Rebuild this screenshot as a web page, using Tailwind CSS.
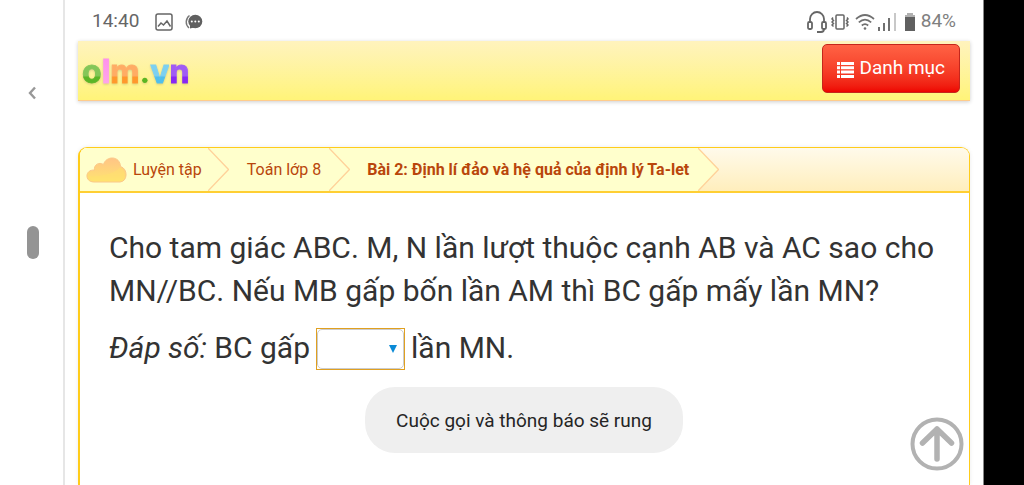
<!DOCTYPE html>
<html lang="vi">
<head>
  <meta charset="UTF-8" />
  <meta name="viewport" content="width=device-width, initial-scale=1.0" />
  <title>Toán lớp 8 - olm.vn</title>
  <script src="https://cdn.jsdelivr.net/npm/@tailwindcss/browser@4"></script>
</head>
<body class="bg-white font-['Roboto',sans-serif] text-[#333] h-screen flex overflow-hidden">
  <!-- Edge panel -->
  <aside class="w-[65px] shrink-0 border-r-2 border-[#e6e6e6] flex flex-col items-center pt-[85px]">
    <button type="button" aria-label="Quay lại" class="h-4">
      <svg class="w-3 h-4" viewBox="0 0 12 16" fill="none" stroke="#989898" stroke-width="2.400"><path d="M9 2.500 4 8l5 5.500" /></svg>
    </button>
    <div class="mt-[125px] ml-0.5 w-3 h-[33px] rounded-full bg-[#949494]"></div>
  </aside>

  <div class="flex-1 min-w-0 flex flex-col px-[13px]">
    <!-- Status bar -->
    <div class="h-[41px] shrink-0 flex items-center justify-between pt-0.5 pl-3.5 pr-3.5 text-[19px] text-[#666]">
      <div class="flex items-center">
        <span>14:40</span>
        <svg class="ml-4 w-[18px] h-[18px]" viewBox="0 0 18 18" fill="none" stroke="#666" stroke-width="1.500"><rect x="1" y="1" width="16" height="16" rx="2" /><path d="M3 13.500 6 10l2.500 2L12 8l3.500 5.500" /></svg>
        <svg class="ml-3 w-[18px] h-4" viewBox="0 0 18 16"><path d="M4.500 1.500a8 8 0 0 0-.5 12.500" fill="none" stroke="#777" stroke-width="1.400" /><ellipse cx="10.300" cy="7.500" rx="7" ry="6.700" fill="#606060" /><path d="M5 9v5.500l4-1z" fill="#606060" /><g fill="#fff"><circle cx="6.800" cy="7.500" r="1" /><circle cx="10.300" cy="7.500" r="1" /><circle cx="13.800" cy="7.500" r="1" /></g></svg>
      </div>
      <div class="flex items-center">
        <svg class="w-5 h-[22px]" viewBox="0 0 20 22" fill="none" stroke="#666" stroke-width="1.800"><path d="M3 12V8a7 7 0 0 1 14 0V18q0 3-3 3h-4" /><rect x="1" y="11" width="4" height="7" rx="1.200" fill="#fff" /><rect x="15" y="11" width="4" height="7" rx="1.200" fill="#fff" /></svg>
        <svg class="ml-1 w-[18px] h-4" viewBox="0 0 18 16" fill="none" stroke="#666" stroke-width="1.500"><rect x="5" y="1" width="8" height="14" rx="1" /><path d="M2 3.500 1 5l1.500 1.500L1 8l1.500 1.500L1 11l1.500 1.500M16 3.500 17 5l-1.500 1.500L17 8l-1.500 1.500L17 11l-1.500 1.500" /></svg>
        <svg class="ml-1.5 w-5 h-4" viewBox="0 0 20 16" fill="none" stroke="#707070" stroke-width="1.700"><path d="M1 5q9-8 18 0M3.800 8.300q6.200-5.500 12.400 0M6.800 11.500q3.200-2.800 6.400 0" /><circle cx="10" cy="14.500" r="1.300" fill="#707070" stroke="none" /></svg>
        <svg class="ml-[3px] w-[18px] h-[18px]" viewBox="0 0 18 18"><path d="M0 14h2v4H0zM5 10h2v8H5zM10 5h2v13h-2z" fill="#707070" /><path d="M16 0h2v18h-2z" fill="#c8c8c8" /></svg>
        <svg class="ml-2 w-3 h-[18px]" viewBox="0 0 12 18"><path d="M3 0h6v2h2v2H1V2h2z" fill="#b0b0b0" /><path d="M1 4h10v14H1z" fill="#606060" /></svg>
        <span class="ml-[5px] text-[#808080]">84%</span>
      </div>
    </div>

    <header class="h-[60px] shrink-0 flex items-start justify-between pt-[3px] pl-1 pr-2.5 bg-linear-to-b from-[#fff3bd] to-[#fff478] border-b border-[#ffcc8c] shadow-[0_1px_4px_rgba(0,0,0,0.2)]">
      <a href="#" class="mt-2 font-['Inter',sans-serif] font-bold text-[32px] leading-[40px] drop-shadow-[0_1px_1px_rgba(0,0,0,0.15)] [-webkit-text-stroke:1px_transparent]"><span class="bg-linear-to-b from-60% from-[#84c658] to-65% to-[#5cb526] bg-clip-text text-transparent">o</span><span class="bg-linear-to-b from-[#ff8cec] to-[#ffaae8] bg-clip-text text-transparent">l</span><span class="bg-linear-to-b from-60% from-[#ffac64] to-65% to-[#ff982c] bg-clip-text text-transparent">m</span><span class="text-[#5bb522]">.</span><span class="bg-linear-to-b from-60% from-[#7cd0f0] to-65% to-[#50beec] bg-clip-text text-transparent">v</span><span class="bg-linear-to-b from-60% from-[#a05cf4] to-65% to-[#8828f4] bg-clip-text text-transparent">n</span></a>
      <button type="button" class="h-[49px] px-3.5 flex items-center gap-[5px] rounded-[5px] border border-[#c4261c] bg-linear-to-b from-[#ff6244] to-[#ee0000] text-white text-[19px]">
        <svg class="mt-0.5 w-[17px] h-4" viewBox="0 0 17 16" fill="#fff"><path d="M0 0h3v3H0zM4 0h13v3H4zM0 4.300h3v3H0zM4 4.300h13v3H4zM0 8.600h3v3H0zM4 8.600h13v3H4zM0 13h3v3H0zM4 13h13v3H4z" /></svg>
        Danh mục
      </button>
    </header>

    <main class="mt-[46px] flex-1 flex flex-col border-t border-l-2 border-r border-[#ffcc1a] rounded-t-[9px] shadow-[0_0_4px_rgba(0,0,0,0.08)] overflow-hidden">
      <nav class="h-[45px] shrink-0 flex border-b-2 border-[#ffcf33] bg-linear-to-b from-[#fffaeb] to-[#ffeebc] text-[16px] text-[#b9460b]">
        <a href="#" class="flex items-center px-1.5 gap-1.5 bg-[#ffffcc]">
          <svg class="w-[41px] h-[26px]" viewBox="0 0 41 26">
            <defs><linearGradient id="cloud" x1="0" y1="0" x2="0" y2="1"><stop offset="0" stop-color="#ffc486" /><stop offset="1" stop-color="#ffe470" /></linearGradient></defs>
            <path d="M8 25C-1.500 25-1.500 12.500 8.500 13 7.500 8 13 4.500 17.500 7.500 20-1.500 34-1.500 34.500 9.500 42 11.500 42 24.500 34 25z" fill="url(#cloud)" stroke="#fac888" stroke-width="1" />
            <path d="M3 19C18 20 31 15 34 10c6 3 6 13-1 14H8q-4 0-5-5z" fill="#ffe36c" opacity=".4" />
          </svg>
          Luyện tập
        </a>
        <svg class="w-[21px] h-[43px] shrink-0 bg-[#ffffcc]" viewBox="0 0 21 43" fill="none" stroke="#ffd29a" stroke-width="1.300"><path d="M0 0 20.500 21.500 0 43" /></svg>
        <a href="#" class="flex items-center pl-[18px] pr-2 bg-[#ffffcc]">Toán lớp 8</a>
        <svg class="w-[21px] h-[43px] shrink-0 bg-[#ffffcc]" viewBox="0 0 21 43" fill="none" stroke="#ffd29a" stroke-width="1.300"><path d="M0 0 20.500 21.500 0 43" /></svg>
        <a href="#" class="flex items-center pl-[17px] pr-[9px] bg-[#ffffcc] font-bold">Bài 2: Định lí đảo và hệ quả của định lý Ta-let</a>
        <svg class="w-[21px] h-[43px] shrink-0" viewBox="0 0 21 43" fill="#ffffcc" stroke="#ffd29a" stroke-width="1.300"><path d="M0 0 20.500 21.500 0 43" /></svg>
      </nav>

      <section class="pt-[33px] pl-[29px] pr-5 text-[30px] leading-[43px]">
        <p>Cho tam giác ABC. M, N lần lượt thuộc cạnh AB và AC sao cho MN//BC. Nếu MB gấp bốn lần AM thì BC gấp mấy lần MN?</p>
        <div class="mt-3 flex items-center gap-1.5">
          <label for="answer"><em>Đáp số:</em> BC gấp</label>
          <div class="relative mt-1 border border-[#e0a020]">
            <select id="answer" class="block w-[87px] h-10 appearance-none bg-white border border-[#ccc] rounded-[5px] text-[20px]">
              <option></option>
              <option>2</option>
              <option>3</option>
              <option>4</option>
              <option>5</option>
            </select>
            <svg class="absolute right-[7px] top-4 w-2 h-2 pointer-events-none" viewBox="0 0 8 8" fill="#0a8ad6"><path d="M0 0h8L4 8z" /></svg>
          </div>
          <span>lần MN.</span>
        </div>
      </section>
    </main>
  </div>

  <div class="w-[41px] shrink-0 bg-black border-l border-[#888]"></div>

  <!-- Toast -->
  <div role="status" class="fixed bottom-8 left-1/2 ml-3 -translate-x-1/2 px-[31px] pt-[21px] pb-[19px] rounded-[30px] bg-[#efefef] text-[19px] leading-[26px] text-[#252525] whitespace-nowrap">Cuộc gọi và thông báo sẽ rung</div>

  <a href="#" aria-label="Lên đầu trang" class="fixed right-[60px] bottom-3.5">
    <svg class="w-[54px] h-[54px]" viewBox="0 0 54 54" fill="none" stroke="#b2b2b2" stroke-linecap="round" stroke-linejoin="round"><circle cx="27" cy="27" r="24.500" stroke-width="4" /><path d="M27 42V12M12.500 26 27 12 41.500 26" stroke-width="5.500" /></svg>
  </a>
</body>
</html>
